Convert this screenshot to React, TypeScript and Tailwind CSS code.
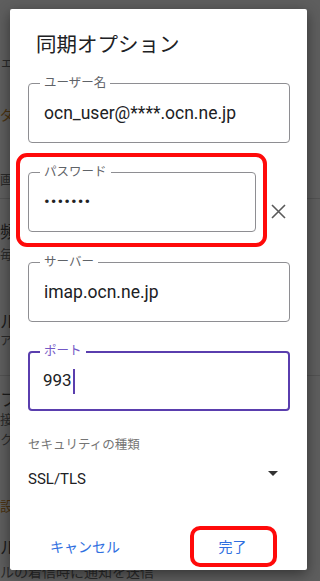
import { ReactNode } from "react";

const font = "font-['Roboto','Noto_Sans_CJK_JP',sans-serif]";

// dimmed settings list behind the dialog
function Backdrop() {
  return (
    <div className="flex flex-col text-[#1c1c1c] whitespace-nowrap">
      <div className="mt-[52px] h-[20px] leading-[20px] text-[13px] text-[#2a2a2a]">ェブ</div>
      <div className="mt-[33px] h-[20px] leading-[20px] text-[14px] text-[#4a3210]">ダイ</div>
      <div className="mt-[45px] h-[20px] leading-[20px] text-[13px] text-[#2a2a2a]">画像</div>
      <div className="mt-[8px] h-px bg-[#525252]" />
      <div className="mt-[22px] h-[22px] leading-[22px] text-[17px]">頻度</div>
      <div className="mt-[2px] h-[20px] leading-[20px] text-[13px] text-[#2a2a2a]">毎</div>
      <div className="mt-[46px] h-[22px] leading-[22px] text-[17px]">ル</div>
      <div className="h-[16px] leading-[16px] text-[12px] text-[#2a2a2a]">ア</div>
      <div className="mt-[26px] h-px bg-[#525252]" />
      <div className="mt-[13px] h-[22px] leading-[22px] text-[17px]">フ</div>
      <div className="h-[18px] leading-[18px] text-[13px] text-[#2a2a2a]">接</div>
      <div className="h-[22px] leading-[22px] text-[13px] text-[#2a2a2a]">ク</div>
      <div className="mt-[45px] h-[20px] leading-[20px] text-[14px] text-[#4a3210]">設定</div>
      <div className="mt-[21px] h-[22px] leading-[22px] text-[17px]">ル</div>
      <div className="mt-[3px] h-[20px] leading-[20px] text-[14px] text-[#2a2a2a]">ルの着信時に通知を送信</div>
    </div>
  );
}

function Field({
  label,
  children,
  focused = false,
  className = "",
}: {
  label: string;
  children: ReactNode;
  focused?: boolean;
  className?: string;
}) {
  return (
    <div
      className={`relative h-[60px] rounded-[4px] flex items-center ${
        focused ? "border-2 border-[#5a3eae] pl-[13px]" : "border border-[#8e8e92] pl-[15px]"
      } ${className}`}
    >
      <span
        className={`absolute bg-white px-[4px] text-[12.5px] leading-[16px] ${
          focused ? "text-[#7358c6] left-[10px] top-[-10px]" : "text-[#5f6368] left-[11px] top-[-9px]"
        }`}
      >
        {label}
      </span>
      {children}
    </div>
  );
}

export default function App() {
  return (
    <div className={`relative w-full h-[581px] overflow-hidden bg-[#5e5e5e] ${font}`}>
      <Backdrop />

      {/* dialog */}
      <div className="absolute left-[10px] top-[9px] w-[297px] h-[561px] bg-white rounded-[2px] shadow-[0_4px_14px_rgba(0,0,0,0.45)] flex flex-col pl-[18px] pr-[17px]">
        <h1 className="mt-[22px] h-[28px] leading-[28px] text-[20.5px] text-[#202124] pl-[8px]">同期オプション</h1>

        <Field label="ユーザー名" className="mt-[24px]">
          <span className="text-[17.5px] text-[#202124]">ocn_user@****.ocn.ne.jp</span>
        </Field>

        <div className="mt-[10px] -ml-[12px] flex items-center">
          <div className="w-[251px] h-[94px] border-4 border-[#ff0a0a] rounded-[11px] pt-[15px] pl-[8px] pr-[7px]">
            <Field label="パスワード">
              <span className="text-[17px] tracking-[1px] text-[#202124]">•••••••</span>
            </Field>
          </div>
          <svg className="ml-[4px] mt-[22px]" width="15" height="15" viewBox="0 0 15 15">
            <path d="M1 1 L14 14 M14 1 L1 14" stroke="#5a5a5a" strokeWidth="1.6" fill="none" />
          </svg>
        </div>

        <Field label="サーバー" className="mt-[15px]">
          <span className="text-[17.5px] text-[#202124]">imap.ocn.ne.jp</span>
        </Field>

        <Field label="ポート" focused className="mt-[29px]">
          <span className="text-[17px] text-[#202124]">993</span>
          <span className="w-[2px] h-[25px] bg-[#5a3eae] ml-[1px]" />
        </Field>

        <div className="mt-[25px] h-[18px] leading-[18px] text-[12.5px] text-[#757575]">セキュリティの種類</div>

        <div className="mt-[13px] h-[24px] flex items-center justify-between pr-[12px]">
          <span className="text-[15px] text-[#202124]">SSL/TLS</span>
          <svg className="-mt-[11px]" width="10" height="5" viewBox="0 0 10 5">
            <path d="M0 0 L10 0 L5 5 Z" fill="#333" />
          </svg>
        </div>

        <div className="mt-[35px] flex items-center justify-between pr-[13px]">
          <button className="ml-[22px] text-[14px] leading-[20px] text-[#2f6fe0]">キャンセル</button>
          <div className="w-[87px] h-[41px] border-4 border-[#ff0a0a] rounded-[10px] flex items-center justify-center">
            <span className="text-[14px] leading-[20px] text-[#2f6fe0] -ml-[2px]">完了</span>
          </div>
        </div>
      </div>
    </div>
  );
}
